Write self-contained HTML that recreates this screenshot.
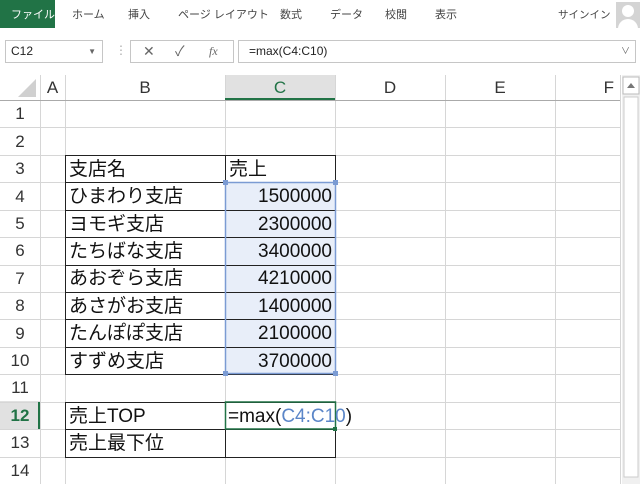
<!DOCTYPE html><html><head><meta charset="utf-8"><style>
*{margin:0;padding:0;box-sizing:border-box}
body{width:640px;height:484px;overflow:hidden;background:#fff;font-family:"Liberation Sans","Noto Sans CJK JP",sans-serif;position:relative;color:#222}
.a{position:absolute}
.tab{position:absolute;top:6px;font-size:11px;color:#444}
.cell{position:absolute;font-size:19px;line-height:27px;white-space:nowrap;color:#111}
.rn{position:absolute;left:0;width:40px;text-align:center;font-size:17px;color:#333;line-height:27px}
.ch{position:absolute;top:75px;height:25px;text-align:center;font-size:17px;line-height:25px;color:#333}
</style></head><body>
<div class="a" style="left:0;top:0;width:55px;height:28px;background:#217346"></div>
<div class="tab" style="left:11px;color:#fff">ファイル</div>
<div class="tab" style="left:72px">ホーム</div>
<div class="tab" style="left:128px">挿入</div>
<div class="tab" style="left:178px">ページ レイアウト</div>
<div class="tab" style="left:280px">数式</div>
<div class="tab" style="left:330px">データ</div>
<div class="tab" style="left:385px">校閲</div>
<div class="tab" style="left:435px">表示</div>
<div class="tab" style="left:558px;font-size:10.5px;top:7px">サインイン</div>
<div class="a" style="left:616px;top:2px;width:24px;height:26px;background:#d4d4d4;overflow:hidden"><div class="a" style="left:6px;top:3px;width:12px;height:12px;border-radius:50%;background:#fff"></div><div class="a" style="left:2px;top:17px;width:20px;height:14px;border-radius:10px 10px 0 0;background:#fff"></div></div>
<div class="a" style="left:5px;top:40px;width:98px;height:23px;border:1px solid #c6c6c6;font-size:12px;line-height:21px;padding-left:5px">C12<span style="position:absolute;right:6px;font-size:8px;color:#666">▼</span></div>
<div class="a" style="left:115px;top:43px;font-size:12px;color:#aaa">⋮</div>
<div class="a" style="left:130px;top:40px;width:104px;height:23px;border:1px solid #c6c6c6;font-size:14px;color:#666;line-height:21px"><span class="a" style="left:12px">✕</span><span class="a" style="left:44px">✓</span><span class="a" style="left:78px;font-family:'Liberation Serif';font-style:italic;font-size:12px">fx</span></div>
<div class="a" style="left:238px;top:40px;width:398px;height:23px;border:1px solid #c6c6c6;font-size:12px;line-height:21px;padding-left:10px">=max(C4:C10)<span style="position:absolute;right:5px;font-size:9px;color:#666">∨</span></div>
<svg class="a" style="left:0;top:75px" width="640" height="409">
<rect x="225" y="0" width="110" height="25" fill="#e1e1e1"/>
<rect x="0" y="326" width="40" height="28" fill="#e1e1e1"/>
<rect x="226" y="107" width="109" height="192" fill="#e8eef9"/>
<g stroke="#d6d6d6" stroke-width="1">
<line x1="40.5" y1="0" x2="40.5" y2="409"/><line x1="65.5" y1="0" x2="65.5" y2="409"/><line x1="225.5" y1="0" x2="225.5" y2="409"/><line x1="335.5" y1="0" x2="335.5" y2="409"/><line x1="445.5" y1="0" x2="445.5" y2="409"/><line x1="555.5" y1="0" x2="555.5" y2="409"/><line x1="620.5" y1="0" x2="620.5" y2="409"/>
<line x1="0" y1="25.5" x2="620" y2="25.5" stroke="#aaa"/>
<line x1="0" y1="52.5" x2="620" y2="52.5"/><line x1="0" y1="80.5" x2="620" y2="80.5"/><line x1="0" y1="107.5" x2="620" y2="107.5"/><line x1="0" y1="135.5" x2="620" y2="135.5"/><line x1="0" y1="162.5" x2="620" y2="162.5"/><line x1="0" y1="190.5" x2="620" y2="190.5"/><line x1="0" y1="217.5" x2="620" y2="217.5"/><line x1="0" y1="244.5" x2="620" y2="244.5"/><line x1="0" y1="272.5" x2="620" y2="272.5"/><line x1="0" y1="299.5" x2="620" y2="299.5"/><line x1="0" y1="327.5" x2="620" y2="327.5"/><line x1="0" y1="354.5" x2="620" y2="354.5"/><line x1="0" y1="382.5" x2="620" y2="382.5"/>
</g>
<polygon points="36,4 36,22 18,22" fill="#d0d0d0"/>
<g stroke="#222" stroke-width="1" fill="none">
<rect x="65.5" y="80.5" width="270" height="219"/>
<line x1="225.5" y1="80" x2="225.5" y2="300"/>
<line x1="65" y1="107.5" x2="336" y2="107.5"/><line x1="65" y1="135.5" x2="336" y2="135.5"/><line x1="65" y1="162.5" x2="336" y2="162.5"/><line x1="65" y1="190.5" x2="336" y2="190.5"/><line x1="65" y1="217.5" x2="336" y2="217.5"/><line x1="65" y1="244.5" x2="336" y2="244.5"/><line x1="65" y1="272.5" x2="336" y2="272.5"/>
<rect x="65.5" y="327.5" width="270" height="55"/>
<line x1="225.5" y1="327" x2="225.5" y2="383"/><line x1="65" y1="354.5" x2="336" y2="354.5"/>
</g>
<rect x="225.5" y="107.5" width="110" height="191" fill="none" stroke="#7b9bd3" stroke-width="1.5"/>
<g fill="#7b9bd3"><rect x="223" y="105" width="5" height="5"/><rect x="333" y="105" width="5" height="5"/><rect x="223" y="296" width="5" height="5"/><rect x="333" y="296" width="5" height="5"/></g>
<rect x="225.5" y="327" width="110" height="27" fill="none" stroke="#217346" stroke-width="1.5"/>
<rect x="333" y="352" width="4" height="4" fill="#217346"/>
<line x1="225" y1="24" x2="335" y2="24" stroke="#217346" stroke-width="2"/>
<line x1="39" y1="327" x2="39" y2="354" stroke="#217346" stroke-width="2"/>
<rect x="622" y="0" width="18" height="409" fill="#f0f0f0"/>
<rect x="623" y="2" width="16" height="17" fill="#fff" stroke="#bbb"/>
<polygon points="627,13 631,8 635,13" fill="#777"/>
<rect x="624" y="22" width="14" height="380" fill="#fff" stroke="#ccc"/>
</svg>
<div class="ch" style="left:40px;width:25px">A</div>
<div class="ch" style="left:65px;width:160px">B</div>
<div class="ch" style="left:225px;width:110px;color:#217346">C</div>
<div class="ch" style="left:335px;width:110px">D</div>
<div class="ch" style="left:445px;width:110px">E</div>
<div class="ch" style="left:555px;width:65px;text-align:right;padding-right:6px">F</div>
<div class="rn" style="top:100px">1</div><div class="rn" style="top:128px">2</div><div class="rn" style="top:155px">3</div><div class="rn" style="top:183px">4</div><div class="rn" style="top:210px">5</div><div class="rn" style="top:237px">6</div><div class="rn" style="top:265px">7</div><div class="rn" style="top:292px">8</div><div class="rn" style="top:320px">9</div><div class="rn" style="top:347px">10</div><div class="rn" style="top:374px">11</div><div class="rn" style="top:402px;color:#217346;font-weight:bold">12</div><div class="rn" style="top:429px">13</div><div class="rn" style="top:457px">14</div>
<div class="cell" style="left:69px;top:156px">支店名</div><div class="cell" style="left:229px;top:156px">売上</div>
<div class="cell" style="left:69px;top:183px">ひまわり支店</div><div class="cell" style="left:229px;top:183px;width:103px;text-align:right">1500000</div>
<div class="cell" style="left:69px;top:211px">ヨモギ支店</div><div class="cell" style="left:229px;top:211px;width:103px;text-align:right">2300000</div>
<div class="cell" style="left:69px;top:238px">たちばな支店</div><div class="cell" style="left:229px;top:238px;width:103px;text-align:right">3400000</div>
<div class="cell" style="left:69px;top:265px">あおぞら支店</div><div class="cell" style="left:229px;top:265px;width:103px;text-align:right">4210000</div>
<div class="cell" style="left:69px;top:293px">あさがお支店</div><div class="cell" style="left:229px;top:293px;width:103px;text-align:right">1400000</div>
<div class="cell" style="left:69px;top:320px">たんぽぽ支店</div><div class="cell" style="left:229px;top:320px;width:103px;text-align:right">2100000</div>
<div class="cell" style="left:69px;top:348px">すずめ支店</div><div class="cell" style="left:229px;top:348px;width:103px;text-align:right">3700000</div>
<div class="cell" style="left:69px;top:403px">売上TOP</div><div class="cell" style="left:228px;top:403px">=max(<span style="color:#5b86c8">C4:C10</span>)</div>
<div class="cell" style="left:69px;top:430px">売上最下位</div>
</body></html>
